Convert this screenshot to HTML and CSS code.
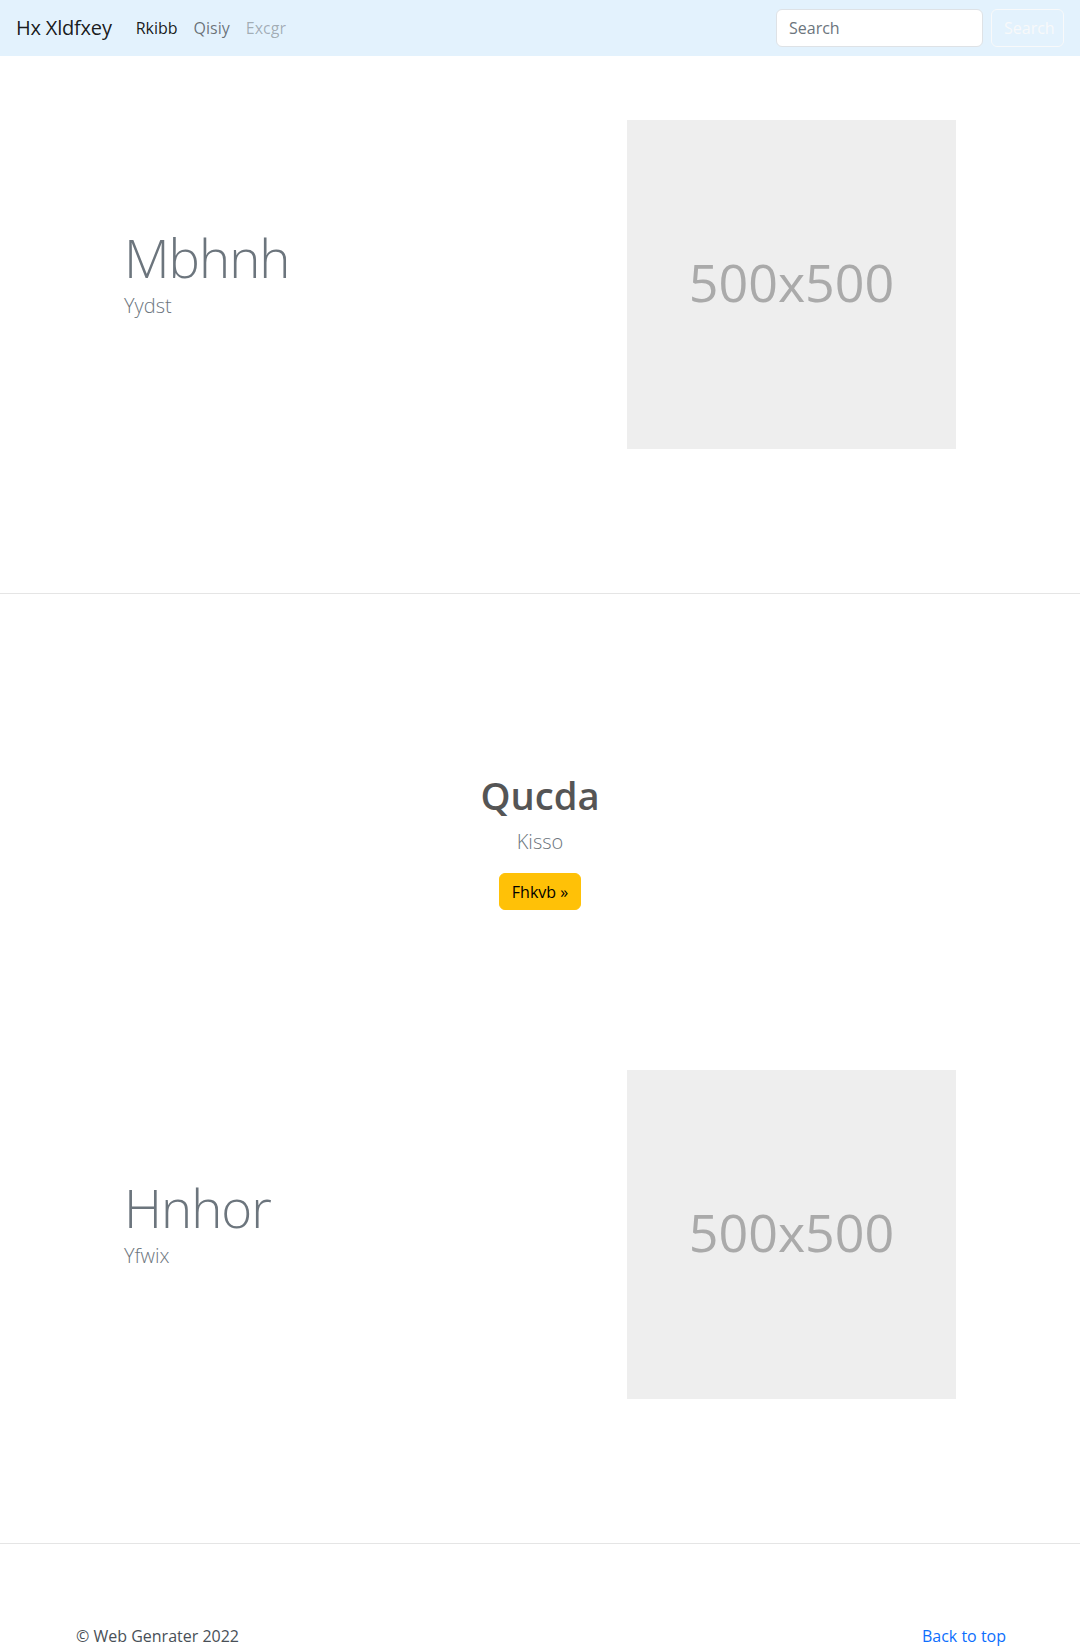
FILE: index.html
```html
<!DOCTYPE html>
<html lang="en">
<head>
<meta charset="utf-8">
<title>Hx Xldfxey</title>
<link rel="stylesheet" href="styles.css">
</head>
<body>
<nav class="navbar">
  <a class="brand" href="#">Hx Xldfxey</a>
  <ul class="nav">
    <li><a class="nav-link active" href="#">Rkibb</a></li>
    <li><a class="nav-link" href="#">Qisiy</a></li>
    <li><a class="nav-link disabled" href="#">Excgr</a></li>
  </ul>
  <form class="search">
    <input class="search-input" type="search" placeholder="Search">
    <button class="search-btn" type="button">Search</button>
  </form>
</nav>

<main>
  <section class="band">
    <div class="featurette">
      <div class="feat-text">
        <h2 class="display">Mbhnh</h2>
        <p class="lead feat-lead">Yydst</p>
      </div>
      <div class="placeholder">500x500</div>
    </div>
  </section>

  <section class="band band-plain">
    <div class="hero">
      <h1 class="hero-title">Qucda</h1>
      <p class="lead">Kisso</p>
      <a class="btn-warning" href="#">Fhkvb &raquo;</a>
    </div>
  </section>

  <section class="band">
    <div class="featurette">
      <div class="feat-text">
        <h2 class="display">Hnhor</h2>
        <p class="lead feat-lead">Yfwix</p>
      </div>
      <div class="placeholder">500x500</div>
    </div>
  </section>
</main>

<footer class="footer">
  <p class="back"><a href="#">Back to top</a></p>
  <p class="copy">&copy; Web Genrater 2022</p>
</footer>
</body>
</html>
```

FILE: styles.css
```css
* { box-sizing: border-box; }

body {
  margin: 0;
  font-family: "Open Sans", "Noto Sans", "Liberation Sans", sans-serif;
  font-size: 16px;
  line-height: 1.5;
  color: #212529;
  background: #fff;
}

a { text-decoration: none; }

/* navbar */
.navbar {
  height: 56px;
  background: #e3f2fd;
  padding: 8px 16px;
  display: flex;
  align-items: center;
}
.brand {
  font-size: 20px;
  line-height: 30px;
  padding: 5px 0;
  margin-right: 16px;
  color: rgba(0, 0, 0, 0.9);
  letter-spacing: -0.2px;
}
.nav {
  list-style: none;
  margin: 0;
  padding: 0;
  display: flex;
}
.nav-link {
  display: block;
  padding: 8px;
  color: rgba(0, 0, 0, 0.55);
}
.nav-link.active { color: rgba(0, 0, 0, 0.9); }
.nav-link.disabled { color: rgba(0, 0, 0, 0.3); }

.search {
  margin-left: auto;
  display: flex;
  gap: 8px;
}
.search-input {
  width: 207px;
  height: 38px;
  padding: 6px 12px;
  font: inherit;
  font-size: 16px;
  color: #212529;
  background: #fff;
  border: 1px solid #dee2e6;
  border-radius: 6px;
}
.search-input::placeholder { color: #6c757d; }
.search-btn {
  width: 73px;
  height: 38px;
  padding: 6px 12px;
  font: inherit;
  font-size: 16px;
  color: #f8f9fa;
  background: transparent;
  border: 1px solid #f8f9fa;
  border-radius: 6px;
}

/* bands */
.band {
  border-bottom: 1px solid #e5e5e5;
}
.band-plain { border-bottom: none; }

.featurette {
  width: 960px;
  margin: 0 auto;
  padding: 64px 64px 144px 12px;
  display: grid;
  grid-template-columns: 1fr 329px;
  align-items: center;
}
.feat-text { padding-left: 52px; }

.display {
  margin: 0 0 2px;
  font-size: 52.8px;
  font-weight: 300;
  line-height: 1.2;
  letter-spacing: -1px;
  color: #6c757d;
}
.lead {
  margin: 0 0 16px;
  font-size: 20px;
  font-weight: 300;
  line-height: 30px;
  color: #6c757d;
}
.feat-lead { margin-bottom: 22px; }

.placeholder {
  width: 329px;
  height: 329px;
  padding-bottom: 6px;
  background: #eeeeee;
  color: #aaaaaa;
  font-size: 52px;
  display: flex;
  align-items: center;
  justify-content: center;
}

.hero {
  height: 412px;
  padding-top: 179px;
  text-align: center;
}
.hero-title {
  margin: 0 0 8px;
  font-size: 38.2px;
  font-weight: 600;
  line-height: 1.2;
  color: #555555;
}
.btn-warning {
  display: inline-block;
  height: 37px;
  padding: 5px 12px;
  font-size: 16px;
  line-height: 26px;
  color: #000;
  background: #ffc107;
  border: 1px solid #ffc107;
  border-radius: 6px;
}

/* footer */
.footer {
  width: 960px;
  margin: 0 auto;
  padding: 80px 14px 0 16px;
}
.footer p { margin: 0; }
.back { float: right; }
.back a { color: #0d6efd; }
.copy { color: #495057; }
```
